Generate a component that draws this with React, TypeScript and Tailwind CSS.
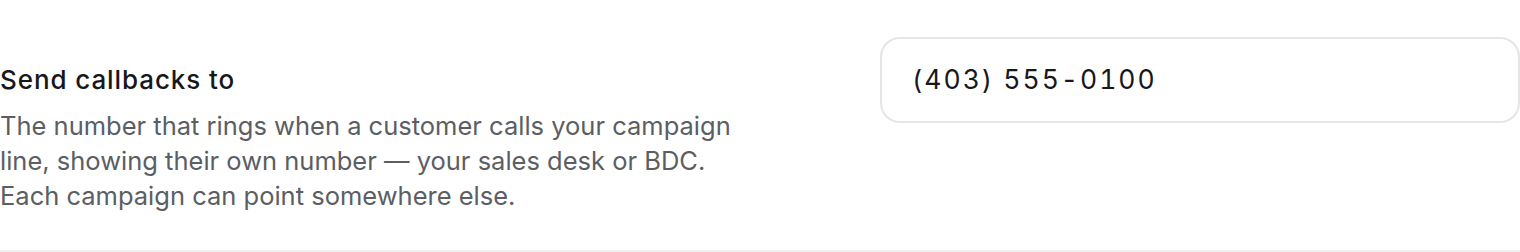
export default function App() {
  return (
    <div
      className="w-[1520px] h-[252px] bg-white border-b-2 border-[#f1f1f1]"
      style={{ fontFamily: "Inter, 'Liberation Sans', sans-serif" }}
    >
      <div className="flex justify-between items-start">
        <div className="pt-[64px] w-[750px]">
          <div className="text-[26px] leading-[32px] font-medium tracking-[0.035em] text-[#18181b]">
            Send callbacks to
          </div>
          <p className="mt-[12px] text-[25.5px] leading-[35px] text-[#5b5e63]">
            The number that rings when a customer calls your campaign line,
            showing their own number — your sales desk or BDC. Each campaign
            can point somewhere else.
          </p>
        </div>
        <div className="mt-[37px] w-[640px] h-[86px] rounded-[20px] border-2 border-[#e6e6e6] flex items-center pl-[30px]">
          <span className="text-[26.5px] text-[#18181b] tabular-nums tracking-[0.075em]">
            (403) 555-0100
          </span>
        </div>
      </div>
    </div>
  );
}
